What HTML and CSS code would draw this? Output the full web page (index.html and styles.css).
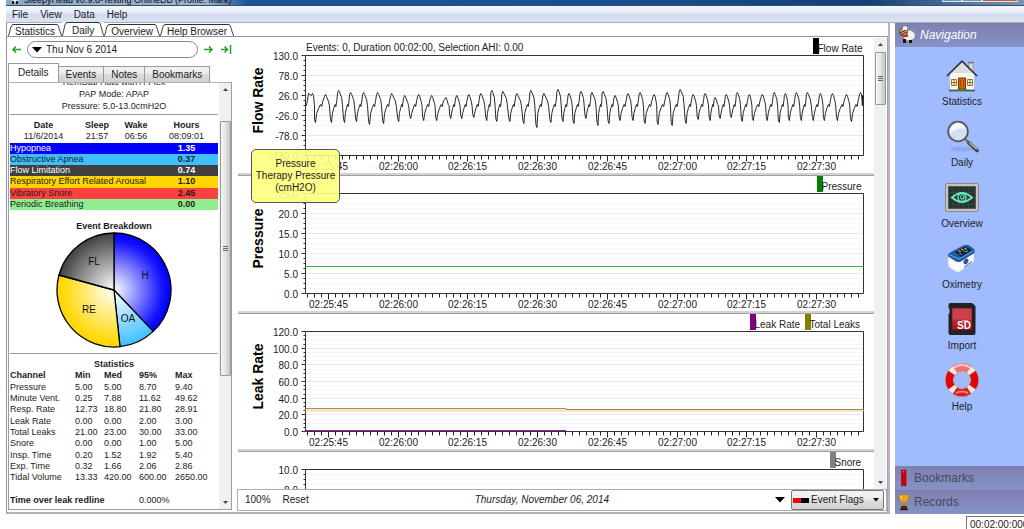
FILE: index.html
```html
<!DOCTYPE html>
<html lang="en">
<head>
<meta charset="utf-8">
<title>SleepyHead</title>
<link rel="stylesheet" href="styles.css">
</head>
<body>
<header class="titlebar">
  <svg class="title-icon" width="12" height="12" viewBox="0 0 12 12"><circle cx="6" cy="5" r="4" fill="#eee"/><path d="M3 8v3h2V8M7 8v3h2V8" fill="#111"/></svg>
  <span class="title-text">SleepyHead v0.9.8-Testing OnlineDB (Profile: Mark)</span>
  <span class="window-buttons"><i></i><i></i><i class="close"></i></span>
</header>
<nav class="menubar">
  <button>File</button><button>View</button><button>Data</button><button>Help</button>
</nav>

<main class="main">
  <section class="pane">
    <div class="tabs">
      <button class="tab"><svg width="5" height="12" viewBox="0 0 5 12"><path d="M0 12C2 10 2 1 5 .5"/></svg><span>Statistics</span><svg width="5" height="12" viewBox="0 0 5 12"><path d="M0 .5C2 1 3 10 5 12"/></svg></button>
      <button class="tab current"><svg width="5" height="14" viewBox="0 0 5 14"><path d="M0 14C2 11 2 1 5 .5"/></svg><span>Daily</span><svg width="5" height="14" viewBox="0 0 5 14"><path d="M0 .5C2 1 3 11 5 14"/></svg></button>
      <button class="tab"><svg width="5" height="12" viewBox="0 0 5 12"><path d="M0 12C2 10 2 1 5 .5"/></svg><span>Overview</span><svg width="5" height="12" viewBox="0 0 5 12"><path d="M0 .5C2 1 3 10 5 12"/></svg></button>
      <button class="tab"><svg width="5" height="12" viewBox="0 0 5 12"><path d="M0 12C2 10 2 1 5 .5"/></svg><span>Help Browser</span><svg width="5" height="12" viewBox="0 0 5 12"><path d="M0 .5C2 1 3 10 5 12"/></svg></button>
    </div>

    <div class="daily">
      <aside class="side">
        <div class="date-row">
          <button class="arrow" aria-label="Previous day"><svg width="11" height="9" viewBox="0 0 11 9"><path d="M10 4.500H2M5 1.500L2 4.500l3 3"/></svg></button>
          <label class="date-box">
            <svg width="10" height="6" viewBox="0 0 10 6"><path d="M0 0h10L5 5.500z"/></svg>
            <select aria-label="Date"><option>Thu Nov 6 2014</option></select>
          </label>
          <button class="arrow" aria-label="Next day"><svg width="11" height="9" viewBox="0 0 11 9"><path d="M1 4.500h8M6 1.500l3 3-3 3"/></svg></button>
          <button class="arrow last" aria-label="Latest day"><svg width="11" height="9" viewBox="0 0 11 9"><path d="M0 4.500h6M3.500 1.500l3 3-3 3M9.500 0v9"/></svg></button>
        </div>
        <div class="subtabs">
          <button class="subtab current">Details</button><button class="subtab">Events</button><button class="subtab">Notes</button><button class="subtab">Bookmarks</button>
        </div>
        <div class="details">
          <div class="report">
            <div class="machine"><div>RemStar Auto with A-Flex</div><div>PAP Mode: APAP</div><div>Pressure: 5.0-13.0cmH2O</div></div>
            <hr>
            <table class="events">
              <colgroup><col class="c-date"><col class="c-sleep"><col class="c-wake"><col></colgroup>
              <tr><th>Date</th><th>Sleep</th><th>Wake</th><th>Hours</th></tr>
              <tr><td>11/6/2014</td><td>21:57</td><td>06:56</td><td>08:09:01</td></tr>
              <tr class="hyp"><td colspan="3">Hypopnea</td><th>1.35</th></tr>
              <tr class="oa"><td colspan="3">Obstructive Apnea</td><th>0.37</th></tr>
              <tr class="fl"><td colspan="3">Flow Limitation</td><th>0.74</th></tr>
              <tr class="re"><td colspan="3">Respiratory Effort Related Arousal</td><th>1.10</th></tr>
              <tr class="vs"><td colspan="3">Vibratory Snore</td><th>2.45</th></tr>
              <tr class="pb"><td colspan="3">Periodic Breathing</td><th>0.00</th></tr>
            </table>
            <h2 class="pie-title">Event Breakdown</h2>
            <svg class="pie" width="118" height="118" viewBox="0 0 118 118">
              <defs>
                <radialGradient id="gh" gradientUnits="userSpaceOnUse" cx="59" cy="59" r="57"><stop offset="0" stop-color="#fff"/><stop offset=".85" stop-color="#1414ff"/><stop offset="1" stop-color="#0000f8"/></radialGradient>
                <radialGradient id="go" gradientUnits="userSpaceOnUse" cx="59" cy="59" r="57"><stop offset="0" stop-color="#fff"/><stop offset="1" stop-color="#40bfff"/></radialGradient>
                <radialGradient id="gr" gradientUnits="userSpaceOnUse" cx="59" cy="59" r="57"><stop offset="0" stop-color="#fff"/><stop offset=".85" stop-color="#ffdb14"/><stop offset="1" stop-color="#ffd500"/></radialGradient>
                <radialGradient id="gf" gradientUnits="userSpaceOnUse" cx="59" cy="59" r="57"><stop offset="0" stop-color="#fff"/><stop offset="1" stop-color="#404040"/></radialGradient>
              </defs>
              <g stroke="#000" stroke-width="1.300" stroke-linejoin="round">
                <path fill="url(#gh)" d="M59 59V2A57 57 0 0 1 98.200 100.400Z"/>
                <path fill="url(#go)" d="M59 59L98.200 100.400A57 57 0 0 1 65 115.700Z"/>
                <path fill="url(#gr)" d="M59 59L65 115.700A57 57 0 0 1 4 44Z"/>
                <path fill="url(#gf)" d="M59 59L4 44A57 57 0 0 1 59 2Z"/>
              </g>
              <g class="pie-label"><text x="90" y="48">H</text><text x="73" y="91">OA</text><text x="34" y="82">RE</text><text x="39" y="34">FL</text></g>
            </svg>
            <hr>
            <table class="stats">
              <colgroup><col class="c-channel"><col class="c-min"><col class="c-med"><col class="c-95"><col></colgroup>
              <tr><th colspan="5" class="center">Statistics</th></tr>
              <tr><th>Channel</th><th>Min</th><th>Med</th><th>95%</th><th>Max</th></tr>
              <tr><td>Pressure</td><td>5.00</td><td>5.00</td><td>8.70</td><td>9.40</td></tr>
              <tr><td>Minute Vent.</td><td>0.25</td><td>7.88</td><td>11.62</td><td>49.62</td></tr>
              <tr><td>Resp. Rate</td><td>12.73</td><td>18.80</td><td>21.80</td><td>28.91</td></tr>
              <tr><td>Leak Rate</td><td>0.00</td><td>0.00</td><td>2.00</td><td>3.00</td></tr>
              <tr><td>Total Leaks</td><td>21.00</td><td>23.00</td><td>30.00</td><td>33.00</td></tr>
              <tr><td>Snore</td><td>0.00</td><td>0.00</td><td>1.00</td><td>5.00</td></tr>
              <tr><td>Insp. Time</td><td>0.20</td><td>1.52</td><td>1.92</td><td>5.40</td></tr>
              <tr><td>Exp. Time</td><td>0.32</td><td>1.66</td><td>2.06</td><td>2.86</td></tr>
              <tr><td>Tidal Volume</td><td>13.33</td><td>420.00</td><td>600.00</td><td>2650.00</td></tr>
              <tr><td colspan="5">&nbsp;</td></tr>
              <tr><th colspan="3">Time over leak redline</th><td colspan="2">0.000%</td></tr>
            </table>
          </div>
          <div class="scrollbar">
            <svg class="up" width="5" height="3" viewBox="0 0 5 3"><path d="M0 3h5L2.500 0z"/></svg>
            <div class="thumb long"><i></i><i></i><i></i></div>
            <svg class="down" width="5" height="3" viewBox="0 0 5 3"><path d="M0 0h5L2.500 3z"/></svg>
          </div>
        </div>
      </aside>

      <section class="graphs">
        <div class="graph-scroll">
          <div class="graph-list">
            <svg class="graph" data-graph="flow"></svg>
            <svg class="graph" data-graph="pressure"></svg>
            <svg class="graph" data-graph="leak"></svg>
            <svg class="graph" data-graph="snore"></svg>
            <div class="tooltip">Pressure<br>Therapy Pressure<br>(cmH2O)</div>
          </div>
          <div class="scrollbar">
            <svg class="up" width="5" height="3" viewBox="0 0 5 3"><path d="M0 3h5L2.500 0z"/></svg>
            <div class="thumb short"><i></i><i></i><i></i></div>
            <svg class="down" width="5" height="3" viewBox="0 0 5 3"><path d="M0 0h5L2.500 3z"/></svg>
          </div>
        </div>
        <div class="toolbar">
          <button>100%</button><button>Reset</button>
          <span class="long-date">Thursday, November 06, 2014</span>
          <button class="drop" aria-label="Graph options"><svg width="10" height="6" viewBox="0 0 10 6"><path d="M0 0h10L5 5.500z"/></svg></button>
          <label class="flags">
            <svg width="16" height="5" viewBox="0 0 16 5"><path fill="#f00" d="M0 0h8v5H0z"/><path d="M8 0h8v5H8z"/></svg>
            <select aria-label="Graphs"><option>Event Flags</option></select>
            <svg width="6" height="4" viewBox="0 0 6 4"><path d="M0 0h6L3 3.500z"/></svg>
          </label>
        </div>
      </section>
    </div>
  </section>

  <nav class="navigation">
    <h1 class="nav-head">
      <svg width="18" height="18" viewBox="0 0 18 18"><ellipse cx="11" cy="9.500" rx="6" ry="5" fill="#f4f2ee" stroke="#aaa" stroke-width=".5"/><path d="M5 13h3v4H5zM11 14h3v3h-3z" fill="#111"/><circle cx="5.500" cy="6" r="4" fill="#e8a860" stroke="#402010" stroke-width=".7"/><circle cx="7" cy="2.500" r="2.300" fill="#fff"/><path d="M2 7l6-3M3 9l6-3" stroke="#222"/><path d="M5 10.500l5-1" stroke="#e01010" stroke-width="1.800"/></svg>
      <em>Navigation</em>
    </h1>
    <div class="nav-items">
      <button><svg width="34" height="34" viewBox="0 0 34 34"><path d="M24 5h4v9h-4z" fill="#ddd" stroke="#888" stroke-width=".6"/><path d="M23 4.500h6" stroke="#777" stroke-width="1.500"/><path d="M5 15L17 4l12 11v17H5z" fill="#f5f5f3"/><path d="M5 15L17 4l12 11z" fill="#dcdedf"/><path d="M4 32.500h26" stroke="#555" stroke-width="1.800"/><path d="M2 18L17 3.200 32 18" fill="none" stroke="#333" stroke-width="1.700"/><path d="M13.500 20h7v11h-7z" fill="#d86400" stroke="#7a3800"/><path d="M15.500 22v7M18.500 22v7" stroke="#b04800"/><g fill="#fff4d0" stroke="#a07030"><path d="M6.500 21.500h5v6h-5zM9 21.500v6M6.500 24.500h5M22.500 21.500h5v6h-5zM25 21.500v6M22.500 24.500h5"/></g><path d="M12 32h10" stroke="#2a8a20" stroke-width="1.500"/></svg>Statistics</button>
      <button><svg width="34" height="34" viewBox="0 0 34 34"><defs><linearGradient id="lens" x1="0" y1="0" x2="1" y2="1"><stop offset="0" stop-color="#f6faff"/><stop offset=".5" stop-color="#cbdcf6"/><stop offset="1" stop-color="#e6f0ff"/></linearGradient></defs><ellipse cx="17" cy="30" rx="12" ry="2.500" fill="#7890cc" opacity=".4"/><path d="M20 20l5 5" stroke="#777" stroke-width="2.500"/><path d="M24 24l8 7.500" stroke="#444" stroke-width="3.600" stroke-linecap="round"/><path d="M24 23.500l8 7" stroke="#bbb" stroke-width="1.200"/><circle cx="13" cy="12.500" r="9.800" fill="url(#lens)" stroke="#555" stroke-width="1.800"/><circle cx="13" cy="12.500" r="8.500" fill="none" stroke="#ccc" stroke-width=".8"/><path d="M5.500 14Q13 8 21 10Q19 4 13 4Q5 5 5.500 14" fill="#fff" opacity=".7"/></svg>Daily</button>
      <button><svg width="34" height="34" viewBox="0 0 34 34"><rect x=".5" y="3.500" width="33" height="28" rx="1.500" fill="#c4c5c4" stroke="#8a8a8a"/><path d="M3.500 6.500h27v22h-27z" fill="#29352f" stroke="#555"/><path d="M8.500 7v21M13.500 7v21M18.500 7v21M23.500 7v21M4 12.500h26M4 18.500h26M4 24.500h26" stroke="#40504a" stroke-width=".5"/><path d="M7 17.500Q17 8.500 27 17.500Q17 26.500 7 17.500Z" fill="none" stroke="#68e8c0" stroke-width="1.800"/><circle cx="17" cy="17.500" r="4" fill="none" stroke="#68e8c0" stroke-width="1.400"/><path d="M19 16q-3-2-3.500 1t3 2v-2h2" fill="none" stroke="#68e8c0"/></svg>Overview</button>
      <button><svg width="34" height="34" viewBox="0 0 34 34"><path d="M3 14l11 6 15-9v8q0 2-2 3L15 30.500Q13 32 11 30.500L5 27Q3 25 3 22z" fill="#fafafc" stroke="#c0c8d8" stroke-width=".6"/><path d="M3 15.500Q2 12.500 6 11L18 4.500Q22 3 25 5l4.500 3.500V12L16 20.500Q13 21.500 11 20.500z" fill="#1f5ca8"/><path d="M4 13.500l10 4.500 14-8" fill="none" stroke="#6aa4e0"/><path d="M10 11l10-5.500 7 3.500-11 7z" fill="#15202c"/><path d="M13 9.500l3 1.500M16 8l3 1.500M19 7l3 1.500" stroke="#e0c840"/><path d="M14 12.500l3 1M19 11l4-1" stroke="#38b0ff"/><ellipse cx="21" cy="20.500" rx="2.200" ry="3" fill="#285a9c" transform="rotate(35 21 20.500)"/><path d="M19 26.500l8-6" stroke="#555"/></svg>Oximetry</button>
      <button><svg width="34" height="34" viewBox="0 0 34 34"><defs><linearGradient id="sd" x1="0" y1="0" x2="0" y2="1"><stop offset="0" stop-color="#c84048"/><stop offset=".5" stop-color="#d04048"/><stop offset=".55" stop-color="#bc2830"/><stop offset="1" stop-color="#a41420"/></linearGradient></defs><path d="M5.500 1H27l3.500 3v27q0 2-2 2h-23q-2 0-2-2V12l1-1V7L3.500 6V3q0-2 2-2z" fill="#202224"/><path d="M7 6h20v22H7z" fill="url(#sd)" stroke="#601018" stroke-width=".6"/><text x="12" y="27" class="sd-label">SD</text><path d="M17 18.500h6" stroke="#e89098"/></svg>Import</button>
      <button><svg width="34" height="34" viewBox="0 0 34 34"><circle cx="17" cy="17" r="12.500" fill="none" stroke="#a88" stroke-width="9"/><circle cx="17" cy="17" r="12.500" fill="none" stroke="#e9e9e6" stroke-width="8"/><g fill="none" stroke-width="8"><path d="M10 6.640A12.500 12.500 0 0 1 24 6.640" stroke="#ee7070"/><path d="M27.360 10A12.500 12.500 0 0 1 27.360 24M6.640 24A12.500 12.500 0 0 1 6.640 10" stroke="#dc0808"/><path d="M24 27.360A12.500 12.500 0 0 1 10 27.360" stroke="#d42020"/></g><path d="M8 5Q17-1 26 5" stroke="#ffc4c0" stroke-width="2" fill="none"/><path d="M11 30Q17 27 23 30" stroke="#f48080" stroke-width="2" fill="none"/><circle cx="17" cy="17" r="8.500" fill="none" stroke="#b9b9c0" stroke-width=".8"/></svg>Help</button>
    </div>
    <button class="nav-section"><svg width="18" height="18" viewBox="0 0 18 18"><path d="M6.500 1H11v16H9.500l-1-1-1 1h-1z" fill="#d00000" stroke="#980000" stroke-width=".6"/><circle cx="8.700" cy="2.800" r=".6" fill="#fff"/></svg>Bookmarks</button>
    <button class="nav-section"><svg width="18" height="18" viewBox="0 0 18 18"><path d="M4.500 2h9v2q0 5-4.500 6-4.500-1-4.500-6z" fill="#e6a420"/><path d="M6 3v3" stroke="#ffe890"/><path d="M4.500 3H3q0 4 3 5M13.500 3H15q0 4-3 5" fill="none" stroke="#c07c10"/><path d="M9 9v4M7 12.500h4" stroke="#c07c10" stroke-width="1.500"/><path d="M6 13h6v3H6z" fill="#5a2408"/><path d="M5 16.500h8" stroke="#38180c" stroke-width="1.500"/></svg>Records</button>
  </nav>
</main>
<footer class="status"><input value="00:02:00:000" aria-label="Visible duration" readonly></footer>
<script src="graphs.js"></script>
</body>
</html>
```
FILE: styles.css
```css
* { box-sizing: border-box; }
body {
  margin: 0; height: 100vh; overflow: hidden; padding-left: 6px;
  display: flex; flex-direction: column;
  font: 10px/12px "Liberation Sans", Arial, sans-serif; color: #1c1c1c; background: #fff;
}
button, select, input { font: inherit; color: inherit; background: none; border: 0; padding: 0; margin: 0; border-radius: 0; }
select { appearance: none; }
hr { border: 0; border-top: 1px solid #999; margin: 0; flex: none; }
h1, h2 { margin: 0; font-size: inherit; font-weight: normal; }

.titlebar {
  flex: none; height: 6px; overflow: hidden; display: flex; align-items: flex-end; gap: 3px; padding-left: 3px;
  background: linear-gradient(90deg, #8fa9c4 0, #9db4cc 200px, #1c5596 240px, #1a5090 60%, #144074 85%, #4c7098 93%, #7895b2);
  border-bottom: 1px solid #30507c;
}
.title-icon { flex: none; }
.title-text { flex: 1; font: 9px/10px "Liberation Sans", Arial, sans-serif; white-space: nowrap; color: #0a0a14; }
.window-buttons { display: flex; height: 6px; flex: none; padding-right: 6px; }
.window-buttons i { width: 20px; height: 3px; border: 1px solid #d8e0ea; border-top: 0; background: #7890a8; }
.window-buttons .close { width: 36px; background: #c8583c; }

.menubar {
  flex: none; height: 17px; display: flex; align-items: center; gap: 12px; padding: 2px 0 0 6px;
  background: linear-gradient(#f4f7fc, #e4eaf6 45%, #d2dbee 50%, #dce3f3); border-bottom: 1px solid #a5acbc;
}

.main { flex: 1; min-height: 0; display: flex; gap: 5px; }
.pane { flex: 1; min-width: 0; display: flex; flex-direction: column; border: 1px solid #8e93a6; border-right: 2px solid #b4b7c2; border-top: 0; border-bottom: 2px solid #b0b4be; }

.tabs { flex: none; height: 14px; display: flex; align-items: flex-end; padding-left: 1px; border-bottom: 1px solid #9096a6; }
.tab { display: flex; height: 12px; }
.tab span { border-top: 1px solid #333; padding: 0 2px; line-height: 13px; }
.tab svg path { fill: none; stroke: #333; }
.tab.current { height: 14px; background: #fff; }
.tab.current span { padding: 0 5px; line-height: 15px; }

.daily { flex: 1; min-height: 0; display: flex; gap: 5px; }
.side { flex: none; width: 225px; padding-left: 1px; display: flex; flex-direction: column; padding-bottom: 2px; }
.date-row { height: 25px; flex: none; display: flex; align-items: center; gap: 5px; padding-left: 3px; }
.arrow { display: flex; }
.arrow.last { padding-left: 2px; }
.arrow path { fill: none; stroke: #27a025; stroke-width: 1.5; }
.date-box { flex: none; width: 171px; height: 17px; display: flex; align-items: center; gap: 4px; padding-left: 4px; border: 1px solid #888; border-radius: 9px; }
.date-box select { flex: 1; }
.subtabs { flex: none; display: flex; align-items: flex-end; height: 20px; }
.subtab { height: 16px; padding: 1px 7px 0; border: 1px solid #9a9a9e; border-left-width: 0; border-bottom: 0; background: linear-gradient(#f2f2f2, #ebebeb 45%, #ddd 50%, #d0d0d0); }
.subtab.current { height: 19px; border-left-width: 1px; background: #fff; padding: 0 9px; }

.details { flex: 1; min-height: 0; display: flex; border: 1px solid #9a9ca8; border-top-color: #b0b2ba; font-size: 9px; line-height: 11px; }
.report { flex: 1; padding: 0 1px; overflow: hidden; display: flex; flex-direction: column; }
.machine { text-align: center; line-height: 12px; height: 31px; display: flex; flex-direction: column; justify-content: flex-end; flex: none; overflow: hidden; padding-bottom: 2px; }
.machine div { flex: none; }
table { border-collapse: collapse; table-layout: fixed; width: 100%; }
td, th { padding: 0; white-space: nowrap; line-height: 11px; }
.events { height: 90px; margin-top: 5px; text-align: center; flex: none; }
.events td[colspan] { text-align: left; }
.c-date { width: 67px; } .c-sleep { width: 40px; } .c-wake { width: 38px; }
.hyp { background: #0000ff; color: #fff; }
.oa { background: #40bfff; }
.fl { background: #404040; color: #fff; }
.re { background: #ffd500; }
.vs { background: #ff4040; }
.pb { background: #90ee90; }
.pie-title { font-weight: bold; text-align: center; line-height: 11px; margin-top: 11px; }
.pie { align-self: center; flex: none; margin: -1px 0 4px; }
.pie-label { font-size: 10px; text-anchor: middle; fill: #111; }
.stats { height: 147px; margin-top: 5px; text-align: left; flex: none; }
.stats .center { text-align: center; }
.c-channel { width: 65px; } .c-min { width: 29px; } .c-med { width: 35px; } .c-95 { width: 36px; }

.scrollbar { flex: none; width: 12px; display: flex; flex-direction: column; align-items: center; background: #f0f0f0; padding: 5px 0; }
.scrollbar svg { flex: none; fill: #444; }
.thumb { width: 11px; border: 1px solid #979797; border-radius: 1px; background: linear-gradient(90deg, #f6f6f6, #e4e4e6 50%, #c4c5c8); display: flex; flex-direction: column; align-items: center; justify-content: center; gap: 1px; }
.thumb i { width: 5px; height: 1px; background: #666; }
.thumb.long { height: 255px; margin-top: 30px; }
.thumb.short { height: 53px; margin-top: 6px; }
.scrollbar .down { margin-top: auto; }

.graphs { flex: 1; min-width: 0; display: flex; flex-direction: column; padding-bottom: 1px; border-right: 1px solid #a0a4b0; }
.graph-scroll { flex: 1; min-height: 0; display: flex; padding: 1px 1px 0; overflow: hidden; }
.graph-list { flex: 1; min-width: 0; position: relative; overflow: hidden; }
.graph { display: block; width: 100%; height: 138px; background: #fff; font-size: 10px; }
.graph text { fill: #222; }
.graph .end { text-anchor: end; }
.graph .mid { text-anchor: middle; }
.graph .name { font-size: 14px; font-weight: bold; text-anchor: middle; fill: #000; }
.tooltip { position: absolute; left: 13px; top: 111px; width: 89px; height: 54px; padding: 8px 0; text-align: center; background: #ffff80e6; border: 1px solid #555; border-radius: 5px; }

.toolbar { flex: none; height: 22px; display: flex; align-items: center; gap: 12px; padding: 0 2px 0 7px; border: 1px solid #a9adb8; }
.long-date { flex: 1; text-align: center; font-style: italic; }
.drop { display: flex; }
.flags { width: 93px; height: 20px; margin-left: -6px; display: flex; align-items: center; gap: 2px; padding: 0 4px 0 1px; border: 1px solid #777; border-radius: 2px; background: linear-gradient(#f4f4f4, #ececec 45%, #dedede 50%, #d0d0d0); }
.flags select { flex: 1; min-width: 0; }

.navigation { flex: none; width: 129px; display: flex; flex-direction: column; background: #a0bcff; }
.nav-head, .nav-section { flex: none; height: 24px; display: flex; align-items: center; gap: 6px; padding-left: 3px; font-size: 12px; background: linear-gradient(#8080b0, #8492c6); }
.nav-head { color: #fff; gap: 4px; }
.nav-section { color: #48485c; gap: 1px; padding-left: 0; }
.nav-items { flex: 1; min-height: 0; display: flex; flex-direction: column; gap: 11px; padding: 11px 0 0 5px; }
.nav-items button { display: flex; flex-direction: column; align-items: center; gap: 4px; }
.sd-label { font-size: 10px; font-weight: bold; fill: #fff; }

.status { flex: none; height: 15px; padding-top: 2px; display: flex; justify-content: flex-end; }
.status input { width: 58px; height: 16px; flex: none; border: 1px solid #777; border-right: 0; padding: 1px 0 0 3px; }
```
FILE: graphs.js
```js
// Breath peaks and troughs: [peak x, peak y, trough x, trough y], x of 557 across the plot, y of 100 down it.
const breaths = [
  [7,38,10,67],[20,39,26,67],[33,35,39,67],[45,37,51,66],[58,37,64,69],[72,37,78,68],[86,38,93,66],[99,40,105,63],
  [113,39,118,65],[126,40,131,65],[140,42,145,63],[151,40,156,63],[163,39,168,62],[175,38,181,65],[186,35,191,66],
  [197,36,204,66],[211,38,218,68],[225,35,231,72],[238,38,245,67],[252,34,257,66],[263,38,268,68],[275,36,280,63],
  [286,37,292,70],[297,36,303,68],[309,40,314,65],[322,38,327,65],[334,37,339,68],[348,39,352,69],[361,37,366,70],
  [374,34,380,68],[387,39,392,64],[399,38,404,65],[409,42,414,63],[420,39,425,62],[431,37,436,66],[443,39,447,65],
  [456,39,461,65],[468,37,473,67],[479,38,483,65],[490,37,495,65],[501,37,507,65],[514,38,518,65],[526,38,531,65],
  [540,39,545,66],[554,37,557,43]
];

const graphs = {
  flow: {
    name: 'Flow Rate', labels: ['130.0', '78.0', '26.0', '-26.0', '-78.0', '-130.0'],
    info: 'Events: 0, Duration 00:02:00, Selection AHI: 0.00',
    legend: [['Flow Rate', '#000', 44]]
  },
  pressure: {
    name: 'Pressure', labels: ['25.0', '20.0', '15.0', '10.0', '5.0', '0.0'],
    legend: [['Pressure', '#008000', 40]],
    lines: [['#3fae3f', [[0, 73], [557, 73]]]]
  },
  leak: {
    name: 'Leak Rate', labels: ['120.0', '100.0', '80.0', '60.0', '40.0', '20.0', '0.0'],
    legend: [['Leak Rate', '#800080', 46], ['Total Leaks', '#808000', 52]],
    lines: [['#fdd4d4', [[0, 79], [557, 79]], 2], ['#9c9a28', [[0, 77], [260, 77], [260, 78], [557, 78]]], ['#992099', [[0, 99], [260, 99]]]]
  },
  snore: { name: '', labels: ['10.0', '8.0', '6.0', '4.0', '2.0', '0.0'], legend: [['Snore', '#808080', 27]] }
};

const TOP = 17.5, LEFT = 67.5, HEIGHT = 100;
const line = (x1, y1, x2, y2, c) => `<path d="M${x1} ${y1}L${x2} ${y2}" stroke="${c}"/>`;

function breathPoints() {
  const pts = [[0, 50], [1, 50], [3, 38]];
  breaths.forEach(([px, py, tx, ty], i) => {
    const prev = i ? breaths[i - 1][2] : 0, gap = px - prev;
    if (i) pts.push([prev + gap * .12, 58], [prev + gap * .3, 53], [prev + gap * .5, 49], [prev + gap * .62, 51], [prev + gap * .75, 45]);
    pts.push([px - 1, py + 2], [px, py], [px + 1, py + 2], [px + (tx - px) * .5, py + 7], [px + (tx - px) * .65, 50], [tx - 1, ty - 3], [tx, ty]);
  });
  return pts;
}

function draw(svg) {
  const g = graphs[svg.dataset.graph], full = svg.clientWidth, right = full - 10.5, w = right - LEFT, bottom = TOP + HEIGHT;
  const path = pts => 'M' + pts.map(([x, y]) => `${(LEFT + x / 557 * w).toFixed(1)} ${(TOP + y).toFixed(1)}`).join('L');
  let out = `<rect y="135" width="${full}" height="2" fill="#d2d2d2"/><rect y="137" width="${full}" height="1" fill="#a0a0a0"/>`;
  const parts = g.labels.length - 1;
  for (let i = 0; i <= parts * 4; i++) {
    const y = Math.round(i * HEIGHT / parts / 4) + TOP, major = i % 4 === 0;
    out += line(LEFT, y, right, y, major ? '#e8e8e8' : '#f6f6f6') + line(LEFT - (major ? 4 : 2), y, LEFT, y, '#333');
    if (major) out += `<text class="end" x="60" y="${y + 4}">${g.labels[i / 4]}</text>`;
  }
  for (let k = 0; k < 80; k++) {
    const t = .4 + k * 1.5, x = Math.floor(LEFT + t / 120 * w) + .5, major = k % 10 === 3;
    out += line(x, bottom, x, bottom + (major ? 6 : 4), '#222');
    if (major) {
      const s = 45 + (k - 3) * 1.5, m = 25 + Math.floor(s / 60);
      out += `<text class="mid" x="${x}" y="${bottom + 14}">02:${m}:${String(s % 60).padStart(2, '0')}</text>`;
    }
  }
  out += `<path d="M${LEFT} ${TOP}H${right}V${bottom}H${LEFT}Z" fill="none" stroke="#333"/>`;
  (g.lines || []).forEach(([c, pts, sw]) => { out += `<path d="${path(pts)}" fill="none" stroke="${c}" stroke-width="${sw || 1}"/>`; });
  if (g.info) out += `<path d="${path(breathPoints())}" fill="none" stroke="#111" stroke-width=".9"/><text x="68" y="13">${g.info}</text>`;
  let x = right - 2;
  [...g.legend].reverse().forEach(([label, c, width]) => {
    x -= width;
    out += `<rect x="${Math.round(x) - 5}" y="0" width="6" height="16" fill="${c}"/><text x="${x}" y="14">${label}</text>`;
    x -= 9;
  });
  out += `<text class="name" transform="translate(25 ${TOP + 45}) rotate(-90)">${g.name}</text>`;
  svg.innerHTML = out;
}

const drawAll = () => document.querySelectorAll('.graph').forEach(draw);
drawAll();
window.addEventListener('resize', drawAll);
```
